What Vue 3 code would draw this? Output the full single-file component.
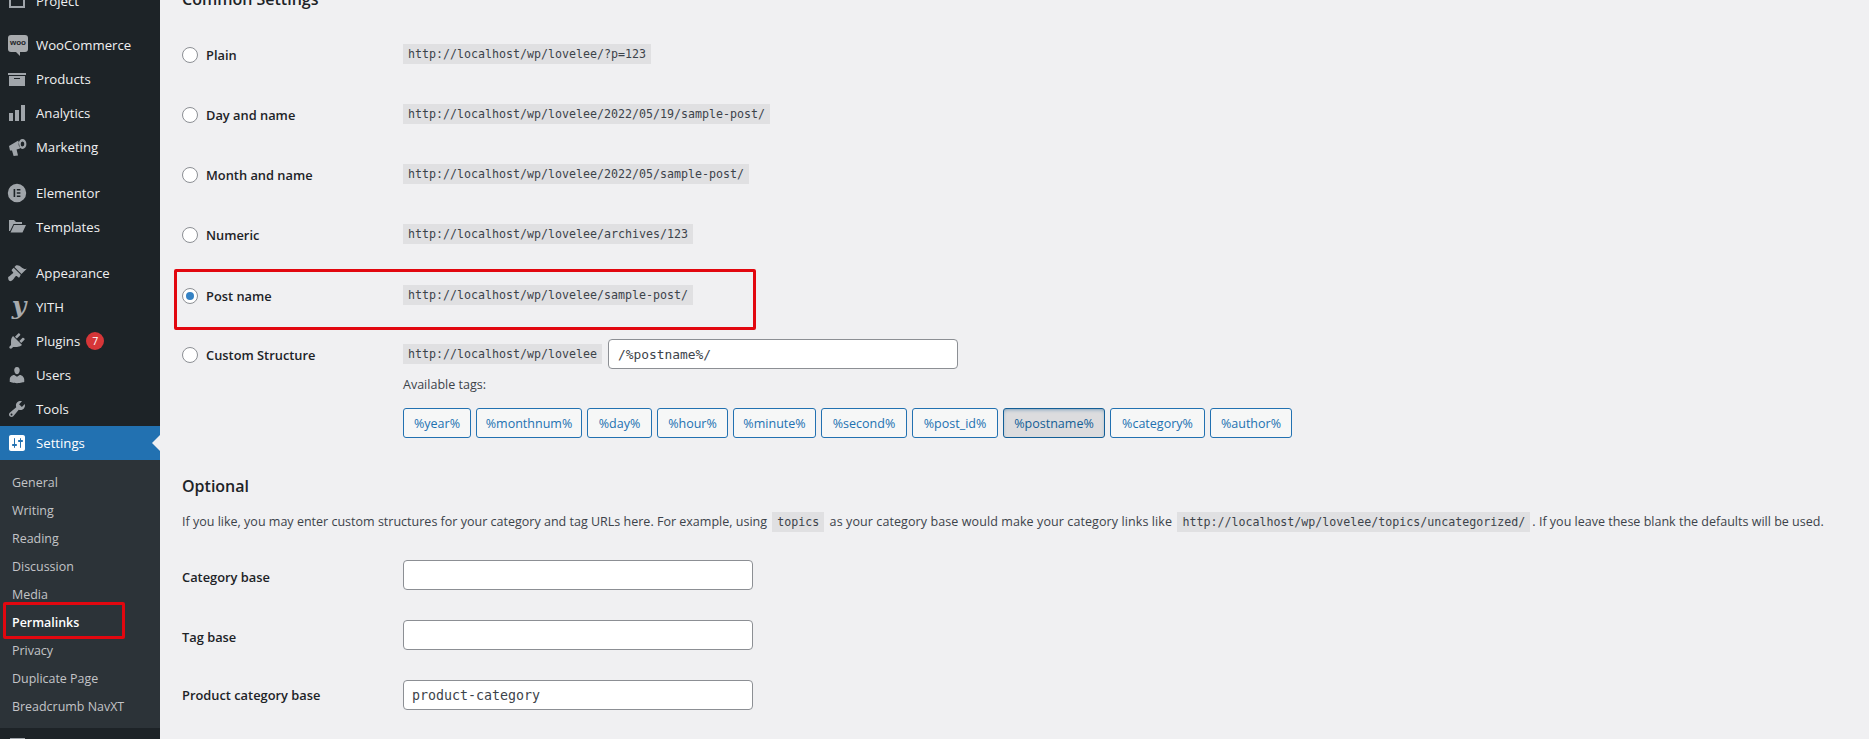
<script setup>
const boxIcon = 'M2 1h16v16H2zM4 3v12h12V3z'
const menu = [
  { label: 'Project', d: boxIcon },
  { sep: 10 },
  { label: 'WooCommerce', kind: 'woo' },
  { label: 'Products', d: 'M19 4v2H1V4h18zM2 7h16v10H2V7zm11 3V9H7v1h6z' },
  { label: 'Analytics', d: 'M18 18V2h-4v16h4zm-6 0V7H8v11h4zm-6 0v-8H2v8h4z' },
  { label: 'Marketing', d: 'M2 9 11.3 3.6 13 11.4 9.6 12.4 11 18.5 6.6 19 5 13.6 3 13.6zM15.5 2a3.9 5 0 1 1 0 10 3.9 5 0 0 1 0-10zm0 2.5a1.8 2.5 0 1 0 0 5 1.8 2.5 0 0 0 0-5z' },
  { sep: 12 },
  { label: 'Elementor', d: 'M10 .8a9.2 9.2 0 1 1 0 18.4A9.2 9.2 0 0 1 10 .8zM6.6 6v8h1.6V6zm3.2 0v1.6h3.6V6zm0 3.2v1.6h3.6V9.2zm0 3.2V14h3.6v-1.6z' },
  { label: 'Templates', d: 'M2 3h5l2 2h6v2H6.5L3 14H2zM7 8h12l-3.5 7.5H3.5z' },
  { sep: 12 },
  { label: 'Appearance', d: 'M14.48 11.06L7.41 3.99l1.5-1.5c.5-.56 2.3-.47 3.51.32 1.21.8 1.43 1.28 2.91 2.1 1.18.64 2.45 1.26 4.45.85zm-.71.71L6.7 4.7 4.93 6.47c-.39.39-.39 1.02 0 1.41l1.06 1.06c.39.39.39 1.03 0 1.42-.6.6-1.43 1.11-2.21 1.69-.35.26-.7.53-1.01.84C1.43 13.23.76 14.28 1.2 15.3c.2 1.5.4 2.2 1.5 2.7 1.02.44 2.07-.23 3.4-1.57.31-.31.58-.66.84-1.01.58-.78 1.09-1.61 1.69-2.21.39-.39 1.03-.39 1.42 0l1.06 1.06c.39.39 1.02.39 1.41 0z' },
  { label: 'YITH', kind: 'yith' },
  { label: 'Plugins', badge: 7, d: 'M13.11 4.36L9.87 7.6 8 5.73l3.24-3.24c.35-.34 1.05-.2 1.56.32.52.51.66 1.21.31 1.55zm-8 1.77l.91-1.12 9.01 9.01-1.19.84c-.71.71-2.63 1.16-3.82 1.16H6.14L4.9 17.26c-.59.59-1.54.59-2.12 0-.59-.58-.59-1.53 0-2.12l1.24-1.24v-3.88c0-1.13.4-3.19 1.09-3.89zm7.26 3.97l3.24-3.24c.34-.35 1.04-.21 1.55.31.52.51.66 1.21.31 1.55l-3.24 3.25z' },
  { label: 'Users', d: 'M10 9.25c-2.27 0-2.73-3.44-2.73-3.44C7 4.02 7.82 2 9.97 2c2.16 0 2.98 2.02 2.71 3.81 0 0-.41 3.44-2.68 3.44zm0 2.57L12.72 10c2.39 0 4.52 2.33 4.52 4.53v2.49s-3.65 1.13-7.24 1.13c-3.65 0-7.24-1.13-7.24-1.13v-2.49c0-2.25 1.94-4.48 4.47-4.48z' },
  { label: 'Tools', d: 'M16.68 9.77c-1.34 1.34-3.3 1.67-4.95.99l-5.41 6.52c-.99.99-2.59.99-3.58 0s-.99-2.59 0-3.57l6.52-5.42c-.68-1.65-.35-3.61.99-4.95 1.28-1.28 3.12-1.62 4.72-1.06l-2.89 2.89 2.82 2.82 2.86-2.87c.53 1.58.18 3.39-1.08 4.65zM3.81 16.21c.4.39 1.04.39 1.43 0 .4-.4.4-1.04 0-1.43-.39-.4-1.03-.4-1.43 0-.39.39-.39 1.03 0 1.43z' },
  { label: 'Settings', active: true, d: 'M18 16V4c0-1.1-.9-2-2-2H4c-1.1 0-2 .9-2 2v12c0 1.1.9 2 2 2h12c1.1 0 2-.9 2-2zM8 11h1c.55 0 1 .45 1 1s-.45 1-1 1H8v1.5c0 .28-.22.5-.5.5s-.5-.22-.5-.5V13H6c-.55 0-1-.45-1-1s.45-1 1-1h1V5.5c0-.28.22-.5.5-.5s.5.22.5.5V11zm5-2h-1c-.55 0-1-.45-1-1s.45-1 1-1h1V5.5c0-.28.22-.5.5-.5s.5.22.5.5V7h1c.55 0 1 .45 1 1s-.45 1-1 1h-1v5.5c0 .28-.22.5-.5.5s-.5-.22-.5-.5V9z' }
]
const submenu = ['General', 'Writing', 'Reading', 'Discussion', 'Media', 'Permalinks', 'Privacy', 'Duplicate Page', 'Breadcrumb NavXT']
const options = [
  { label: 'Plain', url: 'http://localhost/wp/lovelee/?p=123', h: 60 },
  { label: 'Day and name', url: 'http://localhost/wp/lovelee/2022/05/19/sample-post/', h: 60 },
  { label: 'Month and name', url: 'http://localhost/wp/lovelee/2022/05/sample-post/', h: 60 },
  { label: 'Numeric', url: 'http://localhost/wp/lovelee/archives/123', h: 61 },
  { label: 'Post name', url: 'http://localhost/wp/lovelee/sample-post/', h: 59, checked: true }
]
const tags = [
  { t: '%year%', w: 68 }, { t: '%monthnum%', w: 106 }, { t: '%day%', w: 65 }, { t: '%hour%', w: 71 },
  { t: '%minute%', w: 83 }, { t: '%second%', w: 86 }, { t: '%post_id%', w: 86 },
  { t: '%postname%', w: 102, on: true }, { t: '%category%', w: 95 }, { t: '%author%', w: 82 }
]
</script>

<template>
  <div class="page">
    <nav class="side">
      <ul class="menu">
        <template v-for="(m, i) in menu" :key="i">
          <li v-if="m.sep" :style="{ height: m.sep + 'px' }"></li>
          <li v-else class="item" :class="{ active: m.active }">
            <span v-if="m.kind === 'woo'" class="ico woo">woo</span>
            <span v-else-if="m.kind === 'yith'" class="ico yith">y</span>
            <svg v-else class="ico" viewBox="0 0 20 20"><path fill-rule="evenodd" :d="m.d" /></svg>
            <span>{{ m.label }}</span>
            <span v-if="m.badge" class="badge">{{ m.badge }}</span>
          </li>
        </template>
      </ul>
      <ul class="sub">
        <li v-for="s in submenu" :key="s" :class="{ cur: s === 'Permalinks' }">{{ s }}</li>
      </ul>
      <div class="item">
        <svg class="ico" viewBox="0 0 20 20"><path fill-rule="evenodd" d="M3 3h15v15H3zM5 5v11h11V5z" /></svg>
      </div>
    </nav>

    <main class="main">
      <h2 class="head">Common Settings</h2>
      <div class="options">
        <div v-for="o in options" :key="o.label" class="row" :style="{ height: o.h + 'px' }">
          <label class="opt"><input type="radio" name="perm" :checked="o.checked" />{{ o.label }}</label>
          <div><code>{{ o.url }}</code></div>
        </div>
        <div class="row custom">
          <label class="opt"><input type="radio" name="perm" />Custom Structure</label>
          <div>
            <div class="structure">
              <code>http://localhost/wp/lovelee</code>
              <input class="field wide" type="text" value="/%postname%/" />
            </div>
            <p class="avail">Available tags:</p>
            <div class="tags">
              <button v-for="t in tags" :key="t.t" type="button" class="tag" :class="{ on: t.on }" :style="{ width: t.w + 'px' }">{{ t.t }}</button>
            </div>
          </div>
        </div>
      </div>

      <h2 class="head second">Optional</h2>
      <p class="intro">If you like, you may enter custom structures for your category and tag URLs here. For example, using <code class="inl">topics</code><span class="mid"> as your category base would make your category links like </span><code class="inl">http://localhost/wp/lovelee/topics/uncategorized/</code>. If you leave these blank the defaults will be used.</p>
      <div class="form">
        <label>Category base</label><input class="field base" type="text" />
        <label>Tag base</label><input class="field base" type="text" />
        <label class="last">Product category base</label><input class="field base" type="text" value="product-category" />
      </div>
    </main>

    <div class="mark mark-side"></div>
    <div class="mark mark-main"></div>
  </div>
</template>

<style scoped>
.page {
  position: relative;
  display: flex;
  width: 1869px;
  height: 739px;
  overflow: hidden;
  background: #f0f0f2;
  color: #1d2327;
  font-family: "Open Sans", "Noto Sans", sans-serif;
  font-size: 12.52px;
}
ul { list-style: none; margin: 0; padding: 0; }

.side {
  flex: 0 0 160px;
  height: 780px;
  margin-top: -16px;
  background: #1d2327;
  color: #f0f0f1;
}
.item {
  position: relative;
  display: flex;
  align-items: center;
  height: 34px;
  padding-left: 7px;
  gap: 9px;
  font-size: 13.2px;
}
.ico { flex: 0 0 20px; width: 20px; height: 20px; fill: #a0a5aa; }
.woo {
  position: relative;
  height: 17px;
  margin-top: -3px;
  margin-left: 1px;
  margin-right: -1px;
  background: #a7aaad;
  border-radius: 3px;
  color: #1d2327;
  font: 700 8px/16px "Liberation Sans", sans-serif;
  text-align: center;
}
.woo::after {
  content: "";
  position: absolute;
  left: 8px;
  top: 17px;
  border: 2px solid transparent;
  border-top-color: #a7aaad;
  border-right-color: #a7aaad;
}
.yith {
  padding-left: 2px;
  margin-right: -2px;
  color: #a7aaad;
  font: italic 700 25px/17px "DejaVu Serif", serif;
  text-align: center;
}
.badge {
  width: 18px;
  height: 18px;
  margin-left: -3px;
  border-radius: 50%;
  background: #d63638;
  color: #fff;
  font-size: 10.5px;
  line-height: 18px;
  text-align: center;
}
.active { background: #2271b1; color: #fff; }
.active .ico { fill: #fff; }
.active::after {
  content: "";
  position: absolute;
  right: 0;
  top: 9px;
  border: 8px solid transparent;
  border-left-width: 0;
  border-right-color: #f0f0f2;
}

.sub {
  padding: 9px 0 7px;
  background: #2c3338;
  color: #c3c4c7;
  font-size: 12.45px;
}
.sub li {
  height: 28px;
  padding-left: 12px;
  line-height: 28px;
}
.sub .cur { color: #fff; font-weight: 600; }

.main {
  flex: 1;
  padding-left: 22px;
  margin-top: -12px;
}
.head {
  margin: 0;
  font-size: 16px;
  font-weight: 600;
  line-height: 23px;
}
.options { margin-top: 33px; }
.row {
  display: grid;
  grid-template-columns: 221px 1fr;
  align-items: start;
}
.opt {
  display: flex;
  align-items: center;
  gap: 8px;
  height: 20px;
  margin-top: 1px;
  font-size: 12.85px;
  font-weight: 600;
}
.opt input {
  appearance: none;
  position: relative;
  flex: 0 0 16px;
  width: 16px;
  height: 16px;
  margin: 0;
  border: 1px solid #8c8f94;
  border-radius: 50%;
  background: #fff;
}
.opt input:checked::before {
  content: "";
  position: absolute;
  left: 3px;
  top: 3px;
  width: 8px;
  height: 8px;
  border-radius: 50%;
  background: #3582c4;
}
code {
  display: inline-block;
  height: 20px;
  padding: 0 5px;
  background: #e0e0e2;
  color: #3c434a;
  font-family: "DejaVu Sans Mono", monospace;
  font-size: 11.64px;
  line-height: 21px;
  white-space: nowrap;
}
.structure { display: flex; gap: 6px; align-items: flex-start; }
.field {
  box-sizing: border-box;
  height: 30px;
  border: 1px solid #8c8f94;
  border-radius: 4px;
  background: #fff;
  color: #3c434a;
  font-family: "DejaVu Sans Mono", monospace;
  font-size: 12.9px;
  outline: none;
}
.wide { width: 350px; margin-top: -5px; padding: 0 9px; }
.avail { margin: 6px 0 0; height: 20px; line-height: 20px; color: #3c434a; }
.tags { display: flex; gap: 5px; margin-top: 13px; }
.tag {
  box-sizing: border-box;
  height: 30px;
  padding: 0;
  border: 1px solid #2271b1;
  border-radius: 3px;
  background: #f6f7f7;
  color: #2271b1;
  font: inherit;
}
.tag.on {
  background: #dcdcde;
  border-color: #135e96;
  color: #135e96;
  box-shadow: inset 0 2px 5px -3px #135e96;
}
.second { margin-top: 37px; }
.intro {
  margin: 14px 0 28px;
  height: 20px;
  line-height: 20px;
  color: #3c434a;
  white-space: nowrap;
}
.inl { margin: 0 2px; }
.mid { letter-spacing: 0.085px; }
.form {
  display: grid;
  grid-template-columns: 221px 350px;
  grid-auto-rows: 30px;
  row-gap: 30px;
}
.form label { font-size: 12.85px; font-weight: 600; line-height: 20px; padding-top: 7px; }
.form label.last { padding-top: 5px; }
.base { padding: 0 8px; width: 350px; font-size: 13.3px; }

.mark {
  position: absolute;
  box-sizing: border-box;
  border: 3px solid #e2070f;
  border-radius: 2px;
}
.mark-side { left: 3px; top: 602px; width: 122px; height: 37px; }
.mark-main { left: 174px; top: 269px; width: 582px; height: 61px; }
</style>

<style>
html, body { margin: 0; background: #f0f0f2; }
</style>
